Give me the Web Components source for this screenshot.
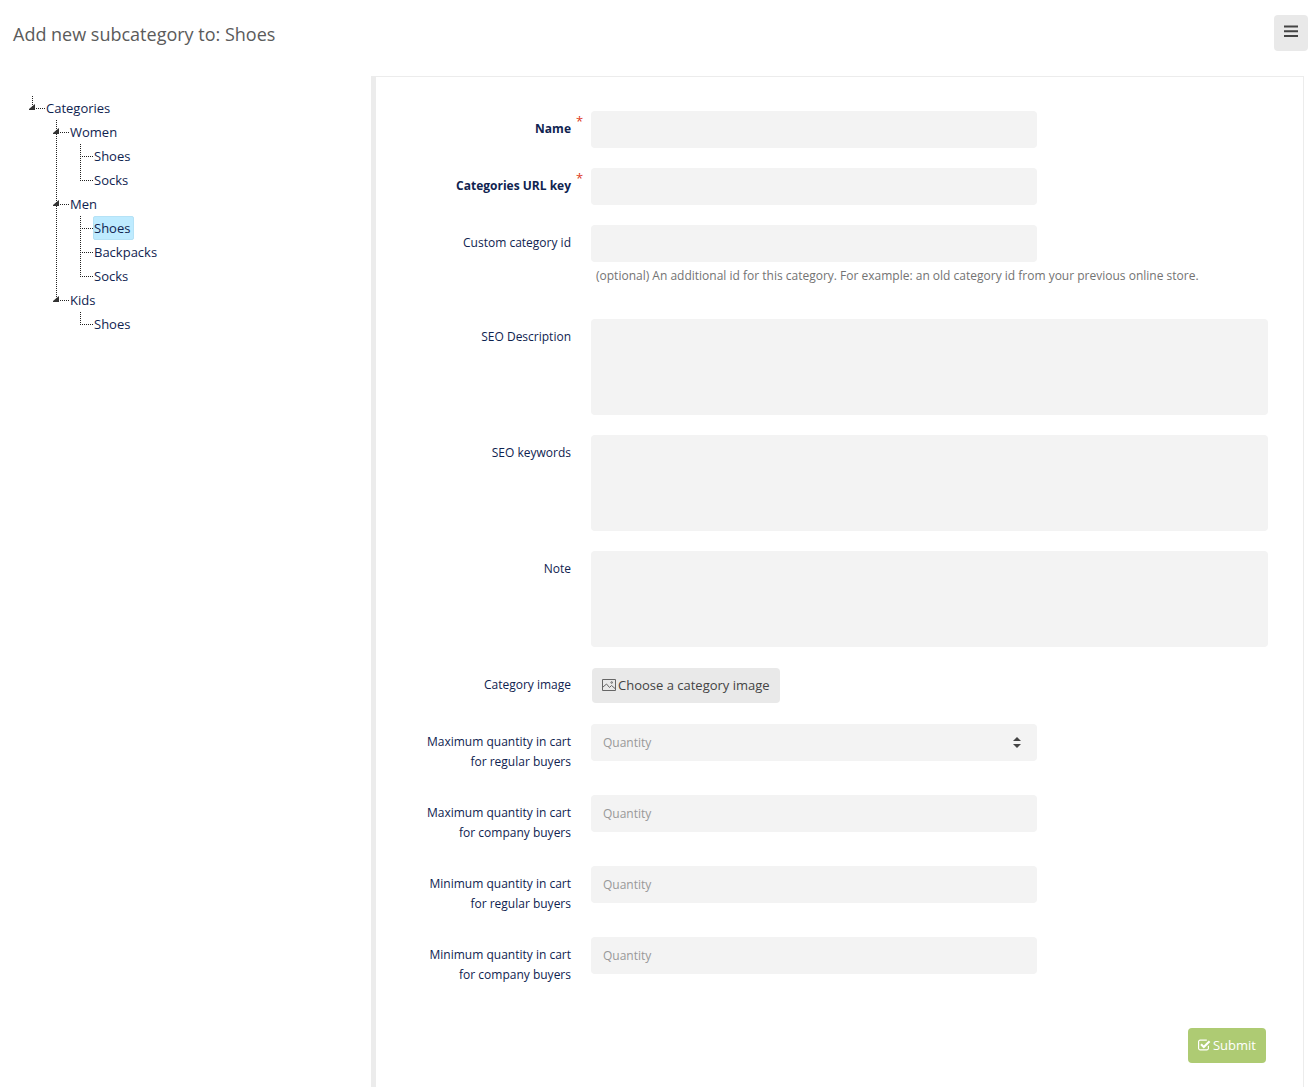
<!DOCTYPE html>
<html lang="en">
<head>
<meta charset="utf-8">
<title>Add new subcategory to: Shoes</title>
<style>
  body { margin: 0; background: #fff; color: #0f2350; font: 13px/20px "Open Sans", sans-serif; }
</style>
</head>
<body>
<category-page>
  <page-header slot="header">Add new subcategory to: Shoes</page-header>
  <category-tree slot="tree">
    <tree-node label="Categories" open>
      <tree-node label="Women" open>
        <tree-node label="Shoes"></tree-node>
        <tree-node label="Socks"></tree-node>
      </tree-node>
      <tree-node label="Men" open>
        <tree-node label="Shoes" selected></tree-node>
        <tree-node label="Backpacks"></tree-node>
        <tree-node label="Socks"></tree-node>
      </tree-node>
      <tree-node label="Kids" open>
        <tree-node label="Shoes"></tree-node>
      </tree-node>
    </tree-node>
  </category-tree>
  <category-form>
    <form-row label="Name" kind="text" required></form-row>
    <form-row label="Categories URL key" kind="text" required></form-row>
    <form-row label="Custom category id" kind="text" help="(optional) An additional id for this category. For example: an old category id from your previous online store."></form-row>
    <form-row label="SEO Description" kind="textarea"></form-row>
    <form-row label="SEO keywords" kind="textarea"></form-row>
    <form-row label="Note" kind="textarea"></form-row>
    <form-row label="Category image" kind="image"></form-row>
    <form-row label="Maximum quantity in cart for regular buyers" kind="number" spinner></form-row>
    <form-row label="Maximum quantity in cart for company buyers" kind="number"></form-row>
    <form-row label="Minimum quantity in cart for regular buyers" kind="number"></form-row>
    <form-row label="Minimum quantity in cart for company buyers" kind="number"></form-row>
    <submit-button slot="actions">Submit</submit-button>
  </category-form>
</category-page>

<script>
const define = (name, html) => customElements.define(name, class extends HTMLElement {
  constructor() {
    super();
    this.attachShadow({ mode: "open" });
  }
  connectedCallback() {
    if (this.shadowRoot.firstChild) return;
    this.shadowRoot.innerHTML = typeof html === "function" ? html(this) : html;
  }
});

const buttonStyle = `
  button { display: flex; align-items: center; gap: 2px; height: 35px; padding: 0 10px 1px; border: 0; border-radius: 4px; background: #e9e9e9; color: #444; font: inherit; white-space: nowrap; }`;

define("category-page", `
  <style>
    :host { display: flex; flex-direction: column; min-height: 100vh; }
    main { flex: 1; display: grid; grid-template-columns: 362px minmax(0, 1fr); padding: 0 9px; }
  </style>
  <slot name="header"></slot>
  <main><slot name="tree"></slot><slot></slot></main>`);

define("page-header", `
  <style>
    :host { display: flex; justify-content: space-between; align-items: flex-start; padding: 15px 5px 25px 13px; }
    h1 { margin: 0; padding: 7px 0 5px; font-size: 18px; line-height: 24px; font-weight: 400; color: #5b5b5b; }
    button { display: flex; justify-content: center; width: 34px; height: 36px; padding: 10px 0; border: 0; border-radius: 4px; background: #e9e9e9; }
  </style>
  <h1><slot></slot></h1>
  <button type="button" aria-label="Menu"><svg width="14" height="13" viewBox="0 0 14 13" fill="#444"><path d="M0 .5h14v2H0zM0 5.300h14v2H0zM0 10h14v2H0z"/></svg></button>`);

define("category-tree", `
  <style>:host { display: block; padding: 20px 12px; }</style>
  <div role="tree"><slot></slot></div>`);

define("tree-node", el => `
  <style>
    :host {
      --down: repeating-linear-gradient(#222 0 1px, transparent 1px 2px);
      --across: repeating-linear-gradient(90deg, #222 0 1px, transparent 1px 2px);
      display: block;
      background: var(--down) 11px 0 / 1px 100% no-repeat;
    }
    :host(:last-child) { background: none; }
    .row { display: flex; height: 24px; }
    .joint {
      width: 24px; height: 24px; box-sizing: border-box; padding: 8px 0 0 8px;
      background: var(--down) 11px 0 / 1px 12px no-repeat, var(--across) 11px 12px / 13px 1px no-repeat;
    }
    svg { display: block; }
    a { box-sizing: border-box; height: 24px; padding: 0 3px 0 0; border: 1px solid transparent; border-radius: 2px; line-height: 22px; color: inherit; text-decoration: none; white-space: nowrap; }
    :host([selected]) a { background: #beebff; border-color: #b5e2f6; }
    .children { padding-left: 24px; }
  </style>
  <div class="row"><span class="joint">${el.hasAttribute("open") ? `<svg width="6" height="6" viewBox="0 0 6 6"><path d="M6 0v6H0V5z" fill="#333"/></svg>` : ""}</span><a href="#" role="treeitem">${el.getAttribute("label")}</a></div>
  <div class="children"><slot></slot></div>`);

define("category-form", `
  <style>
    :host { display: block; border: solid #ececec; border-width: 1px 1px 0 5px; padding: 34px 35px 24px; }
    form { display: flex; flex-direction: column; gap: 20px; }
    footer { display: flex; justify-content: flex-end; padding: 20px 2px 0 0; }
  </style>
  <form><slot></slot><footer><slot name="actions"></slot></footer></form>`);

define("submit-button", `
  <style>
    ${buttonStyle}
    :host { display: inline-flex; }
    button { background: #aecb73; color: #fff; }
  </style>
  <button type="submit"><svg width="13" height="12" viewBox="0 0 13 12" fill="none" stroke="#fff" aria-hidden="true"><path d="M10.400 6.800v2.400a1.600 1.600 0 0 1-1.600 1.600H2.200A1.600 1.600 0 0 1 .6 9.200V2.800a1.600 1.600 0 0 1 1.600-1.600h6.600" stroke-width="1.200"/><path d="M3 5.200l2.800 2.800L11.600 2.200" stroke-width="2.200"/></svg><span><slot></slot></span></button>`);

const controls = {
  text: () => `<input id="control" type="text">`,
  textarea: () => `<textarea id="control"></textarea>`,
  number: el => `<div class="number"><input id="control" type="number" placeholder="Quantity">${el.hasAttribute("spinner") ? `<svg class="spin" width="8" height="11" viewBox="0 0 8 11" fill="#444" aria-hidden="true"><path d="M4 0l4 4H0zM4 11L0 7h8z"/></svg>` : ""}</div>`,
  image: () => `<button id="control" type="button"><svg width="14" height="12" viewBox="0 0 14 12" fill="none" stroke="#666" aria-hidden="true"><path d="M.5.5h13v11H.5z"/><path d="M1 8l3.500-3 3 3.500 2-2L13 9.500"/><circle cx="9.700" cy="3.500" r=".8"/></svg>Choose a category image</button>`
};

define("form-row", el => `
  <style>
    ${buttonStyle}
    :host { display: grid; grid-template-columns: 160px 20px minmax(0, 1fr); align-items: start; }
    label { padding: 8px 0 3px; text-align: right; font-size: 12px; line-height: 20px; }
    :host([required]) label { font-weight: 700; }
    .star { padding-left: 5px; color: #dd3a22; font-size: 13px; line-height: 20px; }
    input, textarea { display: block; box-sizing: border-box; width: 100%; margin: 0; border: 0; border-radius: 4px; padding: 8px 12px; background: #f3f3f3; color: #444; font: inherit; font-size: 12px; outline: 0; }
    input { height: 37px; max-width: 446px; appearance: textfield; }
    input::-webkit-inner-spin-button { appearance: none; }
    input::placeholder { color: #999; }
    textarea { height: 96px; resize: none; }
    .number { position: relative; max-width: 446px; }
    .spin { position: absolute; right: 16px; top: 13px; }
    button { margin: 1px; }
    p { margin: 4px 5px 13px; font-size: 12px; color: #737373; }
  </style>
  <label for="control">${el.getAttribute("label")}</label>
  <span class="star">${el.hasAttribute("required") ? "*" : ""}</span>
  <div>${controls[el.getAttribute("kind")](el)}${el.hasAttribute("help") ? `<p>${el.getAttribute("help")}</p>` : ""}</div>`);
</script>
</body>
</html>
